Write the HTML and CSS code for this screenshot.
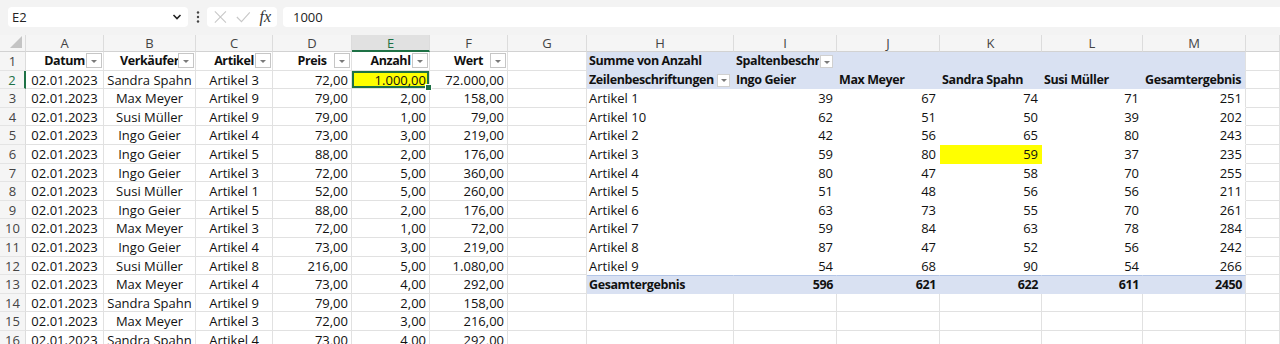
FILE: index.html
```html
<!DOCTYPE html>
<html lang="de">
<head>
    <meta charset="UTF-8">
    <meta name="viewport" content="width=device-width, initial-scale=1.0">
    <title>Mappe1 - Excel</title>
    <link rel="stylesheet" href="styles.css">
</head>
<body>

    <div class="toolbar">
        <div class="namebox">
            <span>E2</span>
            <svg width="10" height="8" viewBox="0 0 10 8"><path d="M1.5 2 L5 5.5 L8.5 2" fill="none" stroke="#222" stroke-width="1.6"/></svg>
        </div>
        <div class="dots">
            <svg width="4" height="14" viewBox="0 0 4 14"><circle cx="2" cy="2.5" r="1.2" fill="#444"/><circle cx="2" cy="7" r="1.2" fill="#444"/><circle cx="2" cy="11.5" r="1.2" fill="#444"/></svg>
        </div>
        <div class="fxbox">
            <svg width="16" height="16" viewBox="0 0 16 16"><path d="M2 2 L14 14 M14 2 L2 14" stroke="#c8c8c8" stroke-width="1.2"/></svg>
            <svg width="18" height="16" viewBox="0 0 18 16"><path d="M2 8 L7 13 L16 3" fill="none" stroke="#c8c8c8" stroke-width="1.2"/></svg>
            <span class="fx">fx</span>
        </div>
        <div class="formula">1000</div>
    </div>

    <div class="sheet" id="sheet">
        <!-- cells are built below -->
    </div>

    <script>
        const letters = ["A", "B", "C", "D", "E", "F", "G", "H", "I", "J", "K", "L", "M"];
        const heads = ["Datum", "Verkäufer", "Artikel", "Preis", "Anzahl", "Wert"];

        const sales = [
            ["02.01.2023", "Sandra Spahn", "Artikel 3", "72,00", "1.000,00", "72.000,00"],
            ["02.01.2023", "Max Meyer", "Artikel 9", "79,00", "2,00", "158,00"],
            ["02.01.2023", "Susi Müller", "Artikel 9", "79,00", "1,00", "79,00"],
            ["02.01.2023", "Ingo Geier", "Artikel 4", "73,00", "3,00", "219,00"],
            ["02.01.2023", "Ingo Geier", "Artikel 5", "88,00", "2,00", "176,00"],
            ["02.01.2023", "Ingo Geier", "Artikel 3", "72,00", "5,00", "360,00"],
            ["02.01.2023", "Susi Müller", "Artikel 1", "52,00", "5,00", "260,00"],
            ["02.01.2023", "Ingo Geier", "Artikel 5", "88,00", "2,00", "176,00"],
            ["02.01.2023", "Max Meyer", "Artikel 3", "72,00", "1,00", "72,00"],
            ["02.01.2023", "Ingo Geier", "Artikel 4", "73,00", "3,00", "219,00"],
            ["02.01.2023", "Susi Müller", "Artikel 8", "216,00", "5,00", "1.080,00"],
            ["02.01.2023", "Max Meyer", "Artikel 4", "73,00", "4,00", "292,00"],
            ["02.01.2023", "Sandra Spahn", "Artikel 9", "79,00", "2,00", "158,00"],
            ["02.01.2023", "Max Meyer", "Artikel 3", "72,00", "3,00", "216,00"],
            ["02.01.2023", "Sandra Spahn", "Artikel 4", "73,00", "4,00", "292,00"]
        ];

        const pivot = [
            ["Artikel 1", 39, 67, 74, 71, 251],
            ["Artikel 10", 62, 51, 50, 39, 202],
            ["Artikel 2", 42, 56, 65, 80, 243],
            ["Artikel 3", 59, 80, 59, 37, 235],
            ["Artikel 4", 80, 47, 58, 70, 255],
            ["Artikel 5", 51, 48, 56, 56, 211],
            ["Artikel 6", 63, 73, 55, 70, 261],
            ["Artikel 7", 59, 84, 63, 78, 284],
            ["Artikel 8", 87, 47, 52, 56, 242],
            ["Artikel 9", 54, 68, 90, 54, 266]
        ];
        const pivotHead = ["Zeilenbeschriftungen", "Ingo Geier", "Max Meyer", "Sandra Spahn", "Susi Müller", "Gesamtergebnis"];
        const pivotTotal = ["Gesamtergebnis", 596, 621, 622, 611, 2450];

        const filterBtn = '<span class="filter"></span>';
        const pivotBtn = '<span class="pfilter"></span>';

        function cell(text, cls) {
            return `<div class="cell ${cls || ""}">${text}</div>`;
        }

        function buildSheet() {
            let html = '<div class="ch corner"></div>';
            letters.forEach(l => {
                html += `<div class="ch ${l === "E" ? "active" : ""}">${l}</div>`;
            });
            html += '<div class="ch"></div>';

            for (let r = 1; r <= 16; r++) {
                html += `<div class="rh ${r === 2 ? "active" : ""}">${r}</div>`;

                // table A-F
                for (let c = 0; c < 6; c++) {
                    if (r === 1) {
                        html += cell(heads[c] + filterBtn, "head");
                    } else {
                        let cls = c < 3 ? "center" : "num";
                        if (r === 2 && c === 4) cls += " selected";
                        html += cell(sales[r - 2][c], cls);
                    }
                }

                // G
                html += cell("", "");

                // pivot H-M
                for (let c = 0; c < 6; c++) {
                    let text = "";
                    let cls = "";
                    if (r === 1) {
                        cls = "pv-head";
                        if (c === 0) text = "Summe von Anzahl";
                        if (c === 1) { text = '<span class="clip">Spaltenbeschriftungen</span>' + pivotBtn; cls += " has-btn"; }
                    } else if (r === 2) {
                        cls = "pv-head";
                        text = pivotHead[c];
                        if (c === 0) { text = `<span class="clip">${text}</span>` + pivotBtn; cls += " has-btn"; }
                    } else if (r <= 12) {
                        text = pivot[r - 3][c];
                        cls = c === 0 ? "pv-body" : "pv-body num";
                        if (r === 6 && c === 3) cls += " mark";
                    } else if (r === 13) {
                        text = pivotTotal[c];
                        cls = c === 0 ? "pv-total" : "pv-total num";
                    }
                    if (c === 5) cls += " last";
                    html += cell(text, cls);
                }

                // N
                html += cell("", "");
            }
            document.getElementById("sheet").innerHTML = html;
        }

        buildSheet();
    </script>

</body>
</html>
```

FILE: styles.css
```css
body {
    margin: 0;
    font-family: "Open Sans", "Noto Sans", sans-serif;
    background: #fff;
    overflow: hidden;
}
.toolbar {
    height: 35px;
    box-sizing: border-box;
    padding: 7px 0 0 8px;
    background: #f3f3f3;
    display: flex;
    align-items: flex-start;
}
.namebox {
    width: 180px;
    height: 20px;
    box-sizing: border-box;
    padding: 0 6px 0 4px;
    background: #fff;
    border-radius: 4px;
    display: flex;
    align-items: center;
    justify-content: space-between;
    font-size: 13px;
    color: #222;
}
.dots {
    width: 19px;
    height: 20px;
    display: flex;
    align-items: center;
    justify-content: center;
}
.fxbox {
    width: 70px;
    height: 20px;
    box-sizing: border-box;
    padding: 0 6px;
    background: #fff;
    border-radius: 4px;
    display: flex;
    align-items: center;
    gap: 7px;
}
.fx {
    font-family: "Liberation Serif", serif;
    font-style: italic;
    font-size: 16px;
    color: #333;
    margin-left: 1px;
}
.formula {
    flex: 1;
    height: 20px;
    margin-left: 6px;
    padding-left: 10px;
    background: #fff;
    border-radius: 4px 0 0 4px;
    font-size: 13px;
    line-height: 20px;
    color: #222;
}
.sheet {
    display: grid;
    grid-template-columns: 26px 78px 92px 77px 79px 78px 78px 79px 147px 103px 103px 102px 101px 103px 1fr;
    grid-template-rows: 17px;
    grid-auto-rows: 18.6px;
    font-size: 13px;
    color: #111;
}
.ch, .rh {
    background: #f5f5f5;
    color: #444;
    text-align: center;
    box-sizing: border-box;
    border-right: 1px solid #dcdcdc;
    border-bottom: 1px solid #d2d2d2;
    font-size: 13px;
    white-space: nowrap;
    overflow: hidden;
}
.ch {
    line-height: 16px;
}
.rh {
    line-height: 18px;
    border-bottom-color: #e4e4e4;
}
.ch.active {
    background: #e1e1e1;
    color: #1e7145;
    border-bottom: 2px solid #1e7145;
}
.rh.active {
    color: #1e7145;
    border-right: 2px solid #1e7145;
}
.corner {
    position: relative;
}
.corner::after {
    content: "";
    position: absolute;
    right: 3px;
    bottom: 3px;
    border-left: 12px solid transparent;
    border-bottom: 12px solid #c4c4c4;
}
.cell {
    position: relative;
    box-sizing: border-box;
    border-right: 1px solid #e1e1e1;
    border-bottom: 1px solid #e1e1e1;
    padding: 0 3px;
    line-height: 18px;
    white-space: nowrap;
    overflow: hidden;
}
.center {
    text-align: center;
}
.num {
    text-align: right;
}
.head, .pv-head, .pv-total {
    font-weight: bold;
    font-size: 12.5px;
    letter-spacing: -0.4px;
}
.head {
    text-align: center;
}
.filter {
    position: absolute;
    right: 1px;
    top: 1px;
    width: 16px;
    height: 15px;
    box-sizing: border-box;
    background: #fff;
    border: 1px solid #c6c6c6;
}
.filter::after, .pfilter::after {
    content: "";
    position: absolute;
    left: 50%;
    top: 50%;
    margin: -1px 0 0 -3px;
    border-left: 3px solid transparent;
    border-right: 3px solid transparent;
    border-top: 3px solid #7a7a7a;
}
.selected {
    background: #ffff00;
    box-shadow: inset 0 0 0 2px #1e7145;
    overflow: visible;
}
.selected::after {
    content: "";
    position: absolute;
    right: -3px;
    bottom: -3px;
    width: 5px;
    height: 5px;
    background: #1e7145;
    border: 1px solid #fff;
    z-index: 2;
}
.pv-head {
    background: #d9e1f2;
    border-color: #d9e1f2;
    padding-left: 2px;
}
.has-btn {
    padding-right: 17px;
}
.clip {
    display: block;
    overflow: hidden;
}
.pfilter {
    position: absolute;
    right: 3px;
    top: 3px;
    width: 13px;
    height: 13px;
    box-sizing: border-box;
    background: #fff;
    border: 1px solid #d0d0d0;
}
.pv-body {
    background: #fff;
    border-color: #fff;
    padding-left: 2px;
}
.pv-total {
    background: #d9e1f2;
    border-color: #d9e1f2;
    border-top: 1px solid #b4c6e7;
    line-height: 17px;
    padding-left: 2px;
}
.mark {
    background: #ffff00;
    border-color: #ffff00;
}
.last {
    border-right-color: #e1e1e1;
}
```
